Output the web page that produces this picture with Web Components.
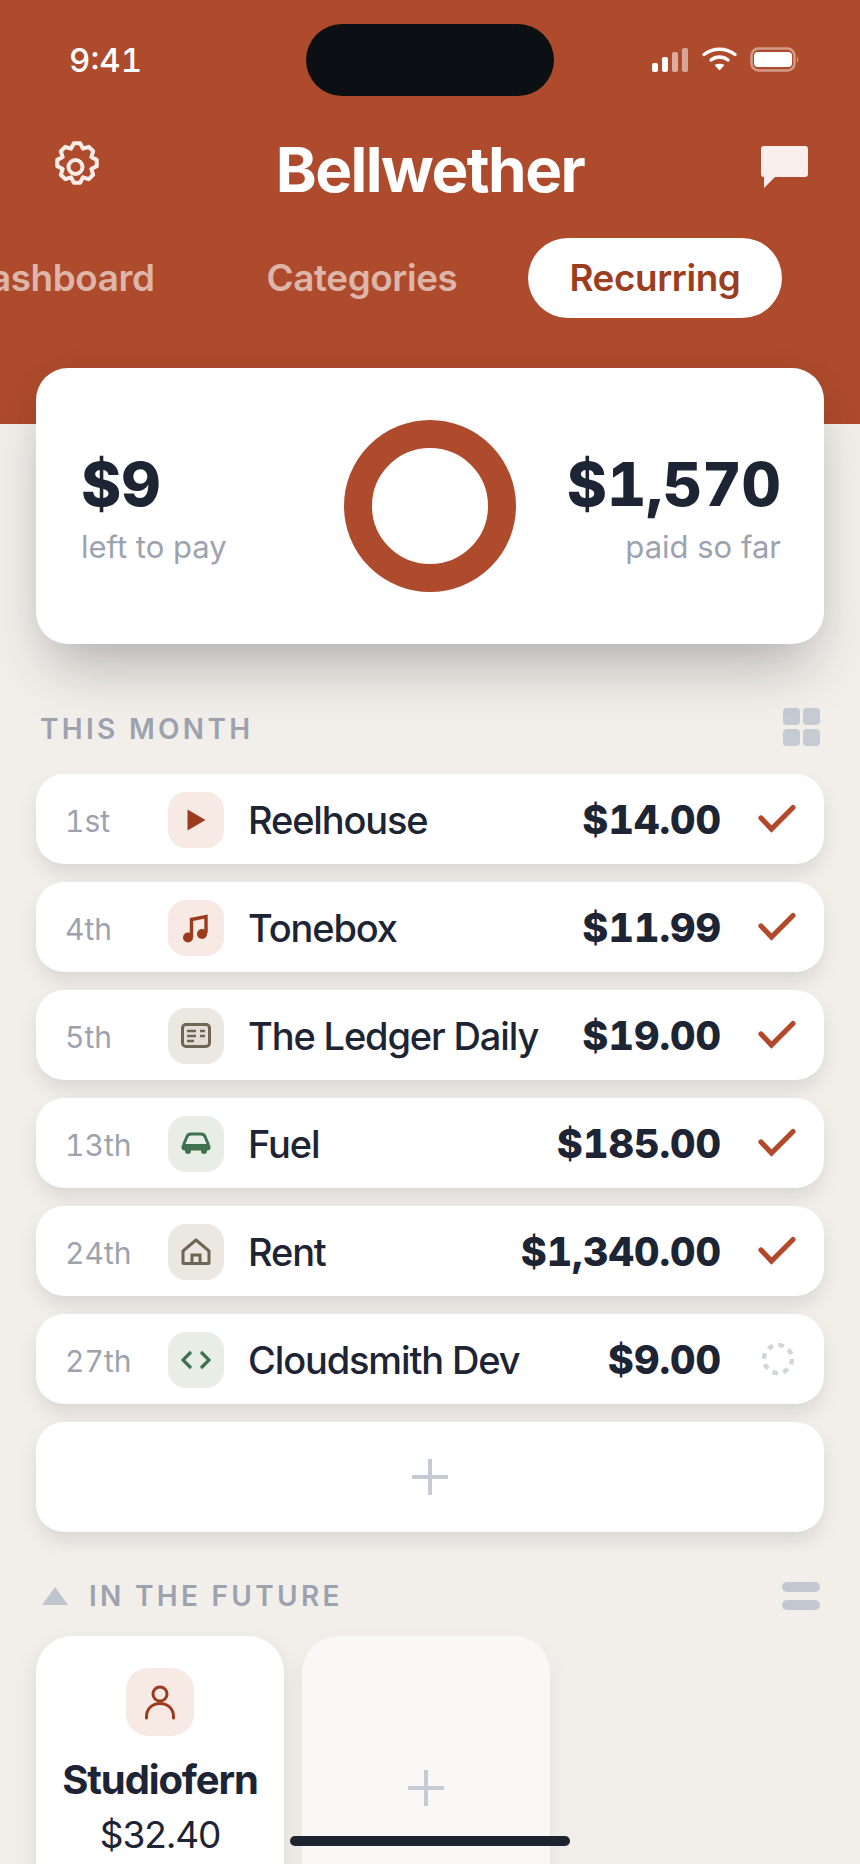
<!doctype html>
<html><head><meta charset="utf-8">
<style>
html,body{margin:0;padding:0}
body{width:860px;height:1864px;overflow:hidden;background:#f2efeb;font-family:Inter,"Liberation Sans",sans-serif;color:#1d2433}
</style></head><body>
<app-screen></app-screen>
<script>
const FONT='Inter,"Liberation Sans",sans-serif';
function def(name,css,html){
  customElements.define(name,class extends HTMLElement{
    connectedCallback(){
      if(this.shadowRoot)return;
      const s=this.attachShadow({mode:'open'});
      const a={};for(const x of this.attributes)a[x.name]=x.value;
      s.innerHTML=`<style>${css}</style>`+(typeof html==='function'?html(a):html);
    }
  });
}
function gearPath(cx,cy,R,r,n){
  let d='';const st=Math.PI*2/n;
  for(let i=0;i<n;i++){
    const t=-Math.PI/2+i*st;
    const pts=[[r,t-st*.5],[R,t-st*.2],[R,t+st*.2]];
    for(const [q,a] of pts){d+=(d?'L':'M')+(cx+q*Math.cos(a)).toFixed(2)+' '+(cy+q*Math.sin(a)).toFixed(2);}
  }
  return d+'Z';
}
const ICONS={
 play:{bg:'#f7e9e3',svg:`<svg width="24" height="24" viewBox="0 0 24 24"><path d="M3.500 1.500 21.500 12 3.500 22.500Z" fill="#9c3a1d"/></svg>`},
 music:{bg:'#f7e9e3',svg:`<svg width="28" height="32" viewBox="0 0 28 32"><path d="M9.500 25V7.500L24 4.500V21" fill="none" stroke="#9c3a1d" stroke-width="3.400"/><circle cx="6" cy="25.500" r="5" fill="#9c3a1d"/><circle cx="20" cy="22" r="5" fill="#9c3a1d"/></svg>`},
 news:{bg:'#ebe7e1',svg:`<svg width="30" height="26" viewBox="0 0 30 26"><rect x="1.500" y="1.500" width="27" height="22" rx="3.500" fill="#e4dfd6" stroke="#6f6655" stroke-width="3"/><path d="M6 8h9M19 8h5M6 13h9M19 13h5M6 18h7" stroke="#6f6655" stroke-width="2.600" fill="none"/></svg>`},
 car:{bg:'#e8ede6',svg:`<svg width="30" height="24" viewBox="0 0 30 24"><path d="M2.500 13 6 4.500Q7 2 10 2h10q3 0 4 2.500L27.500 13" fill="none" stroke="#3f7350" stroke-width="3" stroke-linejoin="round"/><rect x="0.500" y="12" width="29" height="6.500" rx="3.200" fill="#3f7350"/><circle cx="7" cy="19" r="3" fill="#3f7350"/><circle cx="23" cy="19" r="3" fill="#3f7350"/></svg>`},
 home:{bg:'#ebe7e1',svg:`<svg width="30" height="28" viewBox="0 0 30 28"><path d="M2 13 15 2l13 11v11.500a1 1 0 0 1-1 1H3a1 1 0 0 1-1-1Z" fill="none" stroke="#6f6655" stroke-width="3" stroke-linejoin="round"/><path d="M11 25.500V17h8v8.500" fill="none" stroke="#6f6655" stroke-width="3"/></svg>`},
 code:{bg:'#e8ede6',svg:`<svg width="30" height="20" viewBox="0 0 30 20"><path d="M10 2 2 10l8 8M20 2l8 8-8 8" fill="none" stroke="#3f7350" stroke-width="3.200"/></svg>`},
 user:{bg:'#f7e9e3',svg:`<svg width="30" height="36" viewBox="0 0 30 36"><circle cx="15" cy="10" r="7" fill="none" stroke="#9c3a1d" stroke-width="3"/><path d="M1.500 34v-1.500C1.500 24.500 7.500 19.500 15 19.500s13.500 5 13.500 13V34" fill="none" stroke="#9c3a1d" stroke-width="3" stroke-linecap="round"/></svg>`}
};
def('status-bar',`:host{display:flex;align-items:center;justify-content:space-between;height:72px;padding:24px 59px 0 69px;position:relative;color:#fff;font:500 33px/36px ${FONT};font-feature-settings:"tnum"}
.i{position:absolute;left:306px;top:24px;width:248px;height:72px;border-radius:36px;background:#0c0f14}
.r{display:flex;align-items:center}`,
`<span>9:41</span><div class="i"></div><div class="r"><svg width="150" height="26" viewBox="0 0 150 26" style="display:block"><g fill="#fff"><rect x="1" y="16" width="6" height="9" rx="2"/><rect x="11" y="10" width="6" height="15" rx="2"/><rect x="21" y="5" width="6" height="20" rx="2" opacity=".55"/><rect x="31" y="1" width="6" height="24" rx="2" opacity=".5"/></g>
<g fill="none" stroke="#fff" stroke-width="3.400" stroke-linecap="round"><path d="M53 7.500C62 .5 75 .5 84 7.500"/><path d="M60 13c5-4 12-4 17 0"/></g><path d="M63.500 18c3-1.800 7-1.800 10 0l-5 5.500Z" fill="#fff"/>
<rect x="100.500" y="1.500" width="43" height="22" rx="7" fill="none" stroke="#fff" stroke-opacity=".45" stroke-width="2.500"/><rect x="103" y="5" width="38" height="15" rx="4" fill="#fff"/><path d="M146 9.500q2.500 3 0 6Z" fill="#fff" opacity=".5"/></svg></div>`);
def('top-nav',`:host{display:flex;align-items:center;justify-content:space-between;padding:36px 52px 0 55px;height:70px;color:#fff}
h1{margin:6px 0 0;font:700 62px/70px ${FONT};letter-spacing:-.025em}
svg{display:block}`,
`<svg width="44" height="44" viewBox="0 0 44 44" style="margin-top:-8px" fill="none" stroke="#fbeee9" stroke-width="4" stroke-linejoin="round"><path d="${gearPath(22,22,20,15.5,8)}"/><circle cx="20.500" cy="26" r="7"/></svg>
<h1>Bellwether</h1>
<svg width="47" height="42" viewBox="0 0 47 42"><path d="M3 0h41a3 3 0 0 1 3 3v25a3 3 0 0 1-3 3H14L3 42V31a3 3 0 0 1-3-3V3a3 3 0 0 1 3-3Z" fill="#f8efec"/></svg>`);
def('tab-strip',`:host{display:flex;justify-content:flex-end;gap:29px;overflow:hidden;padding:0 78px 0 0;margin-top:36px;height:80px;font:600 36.800px/80px ${FONT}}
span{flex:none;padding:0 41.500px;border-radius:40px;color:rgba(255,255,255,.6);letter-spacing:-.01em}
.a{background:#fff;color:#9c3d20}`,
`<span>Dashboard</span><span>Categories</span><span class="a">Recurring</span>`);
def('app-header',`:host{display:block;background:#ad4b2c;height:424px;box-sizing:border-box;overflow:hidden}`,`<status-bar></status-bar><top-nav></top-nav><tab-strip></tab-strip>`);
def('summary-card',`:host{display:grid;grid-template-columns:1fr 172px 1fr;align-items:center;box-sizing:border-box;height:276px;margin:-56px 36px 0;padding:0 43px;position:relative;border-radius:32px;background:#fff;box-shadow:0 34px 60px -14px rgba(0,0,0,.26),0 0 30px rgba(0,0,0,.04)}
.v{font:800 61px/68px ${FONT};color:#1d2433;font-feature-settings:"tnum"}.l{font:400 31px/38px ${FONT};color:#9ca3af;margin-top:10px}
.s{display:flex;flex-direction:column;padding-top:4px;margin-left:2px}.e{text-align:right;margin:0}
.d{width:172px;height:172px;box-sizing:border-box;border-radius:50%;border:28px solid #ad4b2c}`,
`<div class="s"><div class="v">$9</div><div class="l">left to pay</div></div><div class="d"></div><div class="s e"><div class="v">$1,570</div><div class="l">paid so far</div></div>`);
def('section-head',`:host{display:flex;align-items:center;justify-content:space-between;height:38px;padding:0 40px;font:600 28px/38px ${FONT};letter-spacing:3.300px;color:#9ca3af}
.t{display:flex;align-items:center;gap:21px}.x{padding-top:var(--tp,0)}`,
a=>`<div class="t">${a.arrow!==undefined?'<svg width="26" height="18" viewBox="0 0 26 18" style="margin-left:2px"><path d="M13 0 26 18H0Z" fill="#bfc5cd"/></svg>':''}<span class="x">${a.label}</span></div>${a.icon==='grid'?'<svg width="37" height="38" viewBox="0 0 37 38" fill="#c5cbd3"><rect width="17" height="17" rx="4"/><rect x="20" width="17" height="17" rx="4"/><rect y="21" width="17" height="17" rx="4"/><rect x="20" y="21" width="17" height="17" rx="4"/></svg>':'<svg width="38" height="28" viewBox="0 0 38 28" fill="#c2c8d0"><rect width="38" height="10" rx="5"/><rect y="18" width="38" height="10" rx="5"/></svg>'}`);
def('tile-icon',`:host{display:flex;align-items:center;justify-content:center;flex:none;width:56px;height:56px;border-radius:18px;margin-top:2px}svg{display:block}`,
a=>`<style>:host{background:${ICONS[a.name].bg}}</style>${ICONS[a.name].svg}`);
def('bill-row',`:host{display:flex;align-items:center;height:90px;box-sizing:border-box;padding:0 29px;border-radius:28px;background:#fff;box-shadow:0 10px 20px -2px rgba(0,0,0,.11)}
.d{width:103px;flex:none;font:400 30px/36px ${FONT};color:#9ca3af;font-feature-settings:"tnum";padding-top:3px}
.n{flex:1;margin-left:24px;font:500 38px/44px ${FONT};color:#1d2433;letter-spacing:-.03em;white-space:nowrap;padding-top:1px}
.a{font:800 39.500px/44px ${FONT};color:#1d2433;font-feature-settings:"tnum";padding-top:2px}
.c{width:36px;margin-left:38px;display:flex;justify-content:center}svg{display:block;flex:none}`,
a=>`<div class="d">${a.day}</div><tile-icon name="${a.icon}"></tile-icon><div class="n">${a.name}</div><div class="a">${a.amount}</div><div class="c">${a.pending!==undefined
 ?'<svg width="34" height="34" viewBox="0 0 34 34" style="margin-left:2px"><circle cx="17" cy="17" r="14" fill="none" stroke="#d1d5d8" stroke-width="4.500" stroke-dasharray="5.500 5.500"/></svg>'
 :'<svg width="38" height="30" viewBox="0 0 38 30"><path d="M3 14 13.500 25 35 3.500" fill="none" stroke="#b04a2a" stroke-width="5.200" stroke-linecap="round"/></svg>'}</div>`);
const PLUS=c=>`<svg width="36" height="36" viewBox="0 0 36 36"><path d="M18 1v34M1 18h34" stroke="${c}" stroke-width="4" stroke-linecap="round"/></svg>`;
def('add-row',`:host{display:flex;align-items:center;justify-content:center;height:110px;border-radius:28px;background:#fff;box-shadow:0 10px 20px -2px rgba(0,0,0,.11)}svg{display:block}`,PLUS('#c5cbd3'));
def('future-card',`:host{display:flex;flex-direction:column;align-items:center;flex:none;box-sizing:border-box;width:248px;height:304px;padding-top:32px;border-radius:36px;background:#fff;box-shadow:0 10px 24px rgba(0,0,0,.09)}
.b{width:68px;height:68px;border-radius:22px;background:#f7e9e3;display:flex;align-items:center;justify-content:center}
.n{margin-top:22px;font:700 40px/44px ${FONT};letter-spacing:-.028em;color:#1d2433}.p{margin-top:11px;font:400 37px/44px ${FONT};letter-spacing:-.03em;color:#1d2433}svg{display:block}`,
a=>`<div class="b">${ICONS.user.svg}</div><div class="n">${a.name}</div><div class="p">${a.price}</div>`);
def('future-add',`:host{display:flex;align-items:center;justify-content:center;flex:none;width:248px;height:304px;border-radius:36px;background:#f9f8f6;box-shadow:0 10px 24px rgba(0,0,0,.05)}svg{display:block}`,PLUS('#c5cbd3'));
def('app-screen',`:host{display:block;width:860px;height:1864px;position:relative;overflow:hidden}
.m{display:flex;flex-direction:column;gap:18px;margin:0 36px}
.f{display:flex;gap:18px;margin:0 36px}
.h{position:absolute;left:290px;top:1836px;width:280px;height:10px;border-radius:5px;background:#1c2430}`,
`<app-header></app-header><summary-card></summary-card>
<section-head label="THIS MONTH" icon="grid" style="margin-top:64px;--tp:4px"></section-head>
<div class="m" style="margin-top:28px">
<bill-row day="1st" icon="play" name="Reelhouse" amount="$14.00"></bill-row>
<bill-row day="4th" icon="music" name="Tonebox" amount="$11.99"></bill-row>
<bill-row day="5th" icon="news" name="The Ledger Daily" amount="$19.00"></bill-row>
<bill-row day="13th" icon="car" name="Fuel" amount="$185.00"></bill-row>
<bill-row day="24th" icon="home" name="Rent" amount="$1,340.00"></bill-row>
<bill-row day="27th" icon="code" name="Cloudsmith Dev" amount="$9.00" pending></bill-row>
<add-row></add-row></div>
<section-head label="IN THE FUTURE" icon="stack" arrow style="margin-top:45px"></section-head>
<div class="f" style="margin-top:21px"><future-card name="Studiofern" price="$32.40"></future-card><future-add></future-add></div>
<div class="h"></div>`);
</script></body></html>
